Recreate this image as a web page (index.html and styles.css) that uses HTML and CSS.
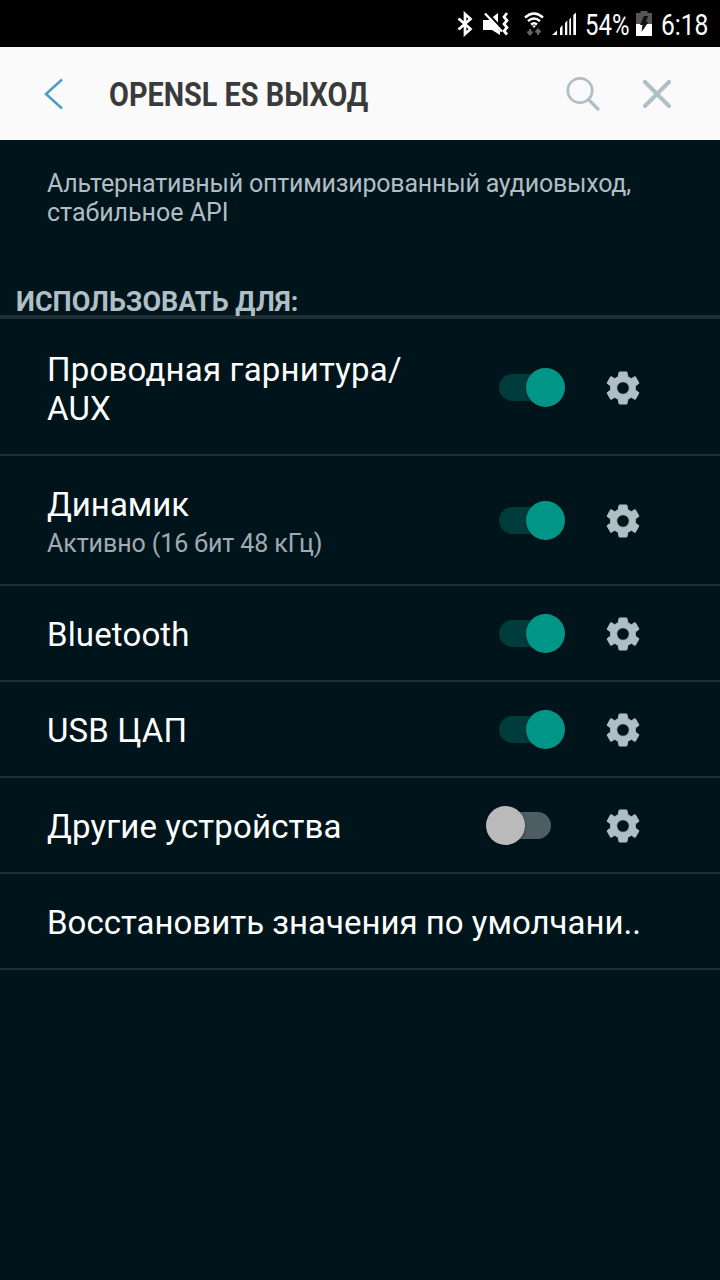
FILE: index.html
```
<!DOCTYPE html>
<html lang="ru">

<head>
  <meta charset="utf-8">
  <title>OPENSL ES ВЫХОД</title>
  <link rel="stylesheet" href="styles.css">
</head>

<body>
  <svg width="0" height="0" class="defs">
    <symbol id="gear" viewBox="-20 -20 40 40">
      <path fill-rule="evenodd" stroke-width="1" stroke-linejoin="round" d="M-3.800-16H3.800L4.800-11.300L8.300-9.300L12.200-11.500L16-4.800L12.300-2V2L16 4.800L12.200 11.500L8.300 9.300L4.800 11.300L3.800 16H-3.800L-4.800 11.300L-8.300 9.300L-12.200 11.500L-16 4.800L-12.300 2V-2L-16-4.800L-12.200-11.500L-8.300-9.300L-4.800-11.300zM6.300 0A6.300 6.300 0 1 0-6.300 0A6.300 6.300 0 1 0 6.300 0z"/>
    </symbol>
  </svg>

  <div class="status-bar">
    <svg class="icon-bluetooth" width="16" height="26" viewBox="0 0 16 26">
      <path d="M1.500 7.500L13.500 18L8 23V3L13.500 8L1.500 18.500" fill="none" stroke="#fff" stroke-width="2.700"/>
    </svg>
    <svg class="icon-mute" width="26" height="24" viewBox="0 0 26 24">
      <path d="M0 8h6l9-7v16l2 2v4l-8-5H0z" fill="#fff"/>
      <path d="M3.500 0l17 18" stroke="#000" stroke-width="2.200"/>
      <path d="M2 1.500l17 18" stroke="#fff" stroke-width="2.400"/>
      <path d="M24 1l-3 4 3 3.500-3 3.500 3 3.500-3 3.500 3 3.500" fill="none" stroke="#fff" stroke-width="2.700"/>
    </svg>
    <svg class="icon-wifi" width="20" height="24" viewBox="0 0 20 24">
      <path d="M1 5.500q9-8 18 0M4 9.200q6-5.400 12 0M7 12.500q3-2.600 6 0" fill="none" stroke="#fff" stroke-width="2.400"/>
      <path d="M8 13.500h4l-2 2.500z" fill="#fff"/>
      <path d="M6 17v5M3.500 19.500L6 22.500l2.500-3M14 23v-5M11.500 20.500L14 17.500l2.500 3" fill="none" stroke="#666" stroke-width="2"/>
    </svg>
    <svg class="icon-signal" width="24" height="24" viewBox="0 0 24 24">
      <path d="M0 23l5-4.500V23zM8 16l2.500-3v10H8zM13 11l2.300-2.500V23H13zM17.300 7.500L19 5.500V23h-1.700zM21.300 3L24 .5V23h-2.700z" fill="#fff"/>
    </svg>
    <span class="status-text battery-level">54%</span>
    <svg class="icon-battery" width="16" height="26" viewBox="0 0 16 26">
      <path d="M4.500 0h7v2H16v11H0V2h4.500z" fill="#555"/>
      <path d="M0 13h16v12H0z" fill="#fff"/>
      <path d="M8 5h4l-2 6h2.500L5.500 21l1-7H4z" fill="#111"/>
    </svg>
    <span class="status-text clock">6:18</span>
  </div>

  <div class="header">
    <svg class="back" width="20" height="32" viewBox="0 0 20 32">
      <path d="M18 1.500L2 16L18 30.500" fill="none" stroke="#4b9dc2" stroke-width="2.500"/>
    </svg>
    <h1>OPENSL ES ВЫХОД</h1>
    <svg class="search" width="34" height="34" viewBox="0 0 34 34">
      <circle cx="14" cy="13.500" r="12.200" fill="none" stroke="#b0bec5" stroke-width="2.800"/>
      <path d="M22.500 22.500L32 32" stroke="#b0bec5" stroke-width="3.200" stroke-linecap="round"/>
    </svg>
    <svg class="close" width="28" height="28" viewBox="0 0 28 28">
      <path d="M2 2L26 26M26 2L2 26" stroke="#b0bec5" stroke-width="4" stroke-linecap="round"/>
    </svg>
  </div>

  <p class="summary"><span class="tight">Альтернативный оптимизированный аудиовыход,</span><br>стабильное API</p>

  <h2>ИСПОЛЬЗОВАТЬ ДЛЯ:</h2>

  <div class="list">
    <div class="row row-tall">
      <div class="label">Проводная гарнитура/<br>AUX</div>
      <div class="switch on"><div class="thumb"></div></div>
      <svg class="gear"><use href="#gear"/></svg>
    </div>
    <div class="row row-sub">
      <div class="label">Динамик<div class="sub">Активно (16 бит 48 кГц)</div></div>
      <div class="switch on"><div class="thumb"></div></div>
      <svg class="gear"><use href="#gear"/></svg>
    </div>
    <div class="row">
      <div class="label">Bluetooth</div>
      <div class="switch on"><div class="thumb"></div></div>
      <svg class="gear"><use href="#gear"/></svg>
    </div>
    <div class="row">
      <div class="label">USB ЦАП</div>
      <div class="switch on"><div class="thumb"></div></div>
      <svg class="gear"><use href="#gear"/></svg>
    </div>
    <div class="row">
      <div class="label">Другие устройства</div>
      <div class="switch"><div class="thumb"></div></div>
      <svg class="gear"><use href="#gear"/></svg>
    </div>
    <div class="row">
      <div class="label label-wide">Восстановить значения по умолчани..</div>
    </div>
  </div>
</body>

</html>
```

FILE: styles.css
```
* {
  box-sizing: border-box;
}

body {
  margin: 0;
  min-height: 1280px;
  background-color: #00141b;
  color: #fff;
  font-family: Roboto, "Liberation Sans", sans-serif;
}

svg {
  display: block;
  flex-shrink: 0;
}

.defs {
  position: absolute;
}

.status-bar {
  display: flex;
  align-items: center;
  height: 47px;
  padding-left: 457px;
  background-color: #000;
}

.icon-mute {
  margin-left: 10px;
}

.icon-wifi {
  margin-left: 15px;
}

.icon-signal {
  margin-left: 8px;
}

.status-text {
  font-size: 30px;
  white-space: nowrap;
  transform: scaleX(0.82);
  transform-origin: left;
}

.battery-level {
  width: 44px;
  margin: 2px 0 0 9px;
  transform: scaleX(0.8);
}

.icon-battery {
  margin-left: 7px;
}

.clock {
  margin: 2px 0 0 9px;
}

.header {
  display: flex;
  align-items: center;
  height: 93px;
  padding-left: 44px;
  background-color: #fafafa;
}

h1 {
  width: 457px;
  margin: 2px 0 0 45px;
  color: #3a3a3a;
  font-size: 33px;
  font-weight: bold;
  white-space: nowrap;
  transform: scaleX(0.874);
  transform-origin: left;
}

.close {
  margin-left: 43px;
}

.summary {
  margin: 0;
  padding: 29px 47px 0;
  height: 145px;
  color: #b0bec5;
  font-size: 25px;
  line-height: 29px;
}

.tight {
  letter-spacing: -0.21px;
}

h2 {
  height: 34px;
  margin: 0;
  padding-left: 16px;
  border-bottom: 4px solid #202f36;
  color: #b0bec5;
  font-size: 27px;
  font-weight: bold;
  line-height: 34px;
}

.row {
  display: flex;
  align-items: center;
  height: 96px;
  padding-left: 47px;
  border-bottom: 2px solid #202f36;
}

.row-tall {
  height: 137px;
  padding-top: 1px;
}

.row-sub {
  height: 130px;
}

.label {
  flex-shrink: 0;
  width: 438px;
  padding-top: 3px;
  font-size: 33px;
  line-height: 39px;
  letter-spacing: 0.14px;
  white-space: nowrap;
}

.row-tall .label {
  padding-top: 4px;
  letter-spacing: 0.2px;
}

.row-sub .label {
  padding-top: 8px;
  letter-spacing: 0;
}

.label-wide {
  width: auto;
  letter-spacing: 0;
}

.row-sub .sub {
  color: #a0acb2;
  font-size: 25px;
  line-height: 39px;
  letter-spacing: -0.08px;
}

.switch {
  display: flex;
  align-items: center;
  flex-shrink: 0;
  width: 52px;
  height: 27px;
  margin: 0 52px 0 14px;
  border-radius: 14px;
  background-color: #4d5d63;
}

.thumb {
  flex-shrink: 0;
  width: 39px;
  height: 39px;
  margin-left: -13px;
  border-radius: 50%;
  background-color: #bababa;
  box-shadow: 0 1px 3px rgba(0, 0, 0, 0.4);
}

.on {
  background-color: #003c3c;
}

.on .thumb {
  margin-left: 27px;
  background-color: #009687;
}

.gear {
  width: 40px;
  height: 40px;
  margin: 1px 0 0 -0.5px;
  fill: #b0bec5;
  stroke: #b0bec5;
}
```
